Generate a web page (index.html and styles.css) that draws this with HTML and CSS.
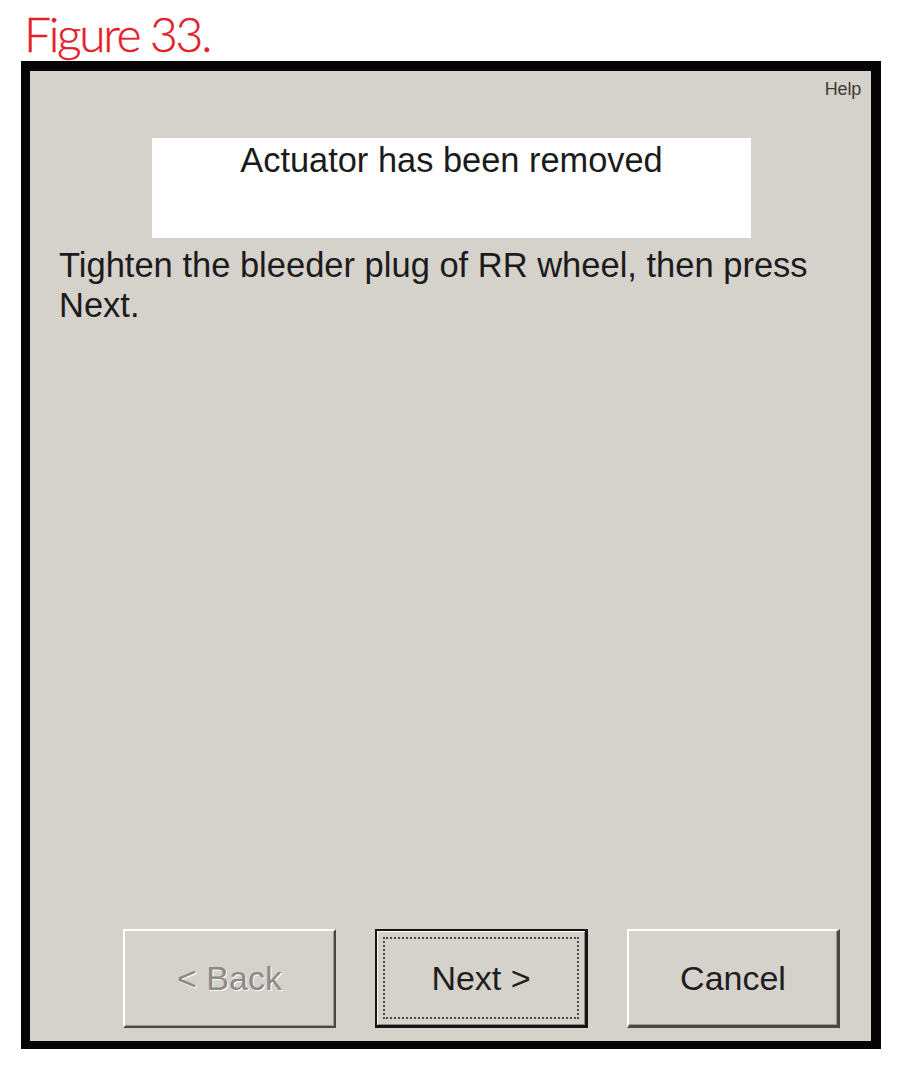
FILE: index.html
```html
<!DOCTYPE html>
<html lang="en">
<head>
<meta charset="utf-8">
<title>Figure 33</title>
<link rel="stylesheet" href="styles.css">
</head>
<body>
<div class="page">
  <h1 class="fig-title">Figure 33.</h1>
  <div class="dialog">
    <div class="help-row"><span class="help">Help</span></div>
    <div class="status-box">Actuator has been removed</div>
    <p class="instruction">Tighten the bleeder plug of RR wheel, then press Next.</p>
    <div class="buttons">
      <button class="btn btn-disabled" disabled><span class="btn-label">&lt; Back</span></button>
      <button class="btn btn-default"><span class="btn-label focus">Next &gt;</span></button>
      <button class="btn btn-normal"><span class="btn-label">Cancel</span></button>
    </div>
  </div>
</div>
</body>
</html>
```

FILE: styles.css
```css
html, body {
  margin: 0;
  padding: 0;
  background: #ffffff;
}

.page {
  width: 904px;
  height: 1072px;
  box-sizing: border-box;
  padding: 0 0 0 21px;
  display: flex;
  flex-direction: column;
}

.fig-title {
  margin: 0;
  padding: 10px 0 0 3px;
  height: 61px;
  box-sizing: border-box;
  font-family: "Lato", "Liberation Sans", sans-serif;
  font-weight: 300;
  font-size: 48px;
  line-height: 48px;
  letter-spacing: -2.3px;
  color: #e3202a;
  -webkit-text-stroke: 0.4px #e3202a;
}

.dialog {
  width: 860px;
  height: 988px;
  flex: none;
  box-sizing: border-box;
  border-style: solid;
  border-color: #050505;
  border-width: 10px 10px 8px 9px;
  background: #d5d1cb;
  display: flex;
  flex-direction: column;
  font-family: "Liberation Sans", Arial, sans-serif;
  color: #1b1b1b;
}

.help-row {
  display: flex;
  justify-content: flex-end;
  padding: 8px 10px 0 0;
  height: 20px;
}

.help {
  font-size: 18px;
  line-height: 20px;
  color: #3a3a3a;
  letter-spacing: -0.2px;
}

.status-box {
  margin: 39px 0 0 122px;
  width: 599px;
  height: 100px;
  box-sizing: border-box;
  padding-top: 3px;
  background: #ffffff;
  text-align: center;
  font-size: 34.4px;
  line-height: 38px;
}

.instruction {
  margin: 7px 30px 0 29px;
  font-size: 34.5px;
  line-height: 40px;
}

.buttons {
  margin-top: auto;
  display: flex;
  gap: 39px;
  padding: 0 0 13px 93px;
}

.btn {
  width: 213px;
  height: 99px;
  flex: none;
  box-sizing: border-box;
  margin: 0;
  padding: 0;
  background: #d5d1cb;
  font-family: "Liberation Sans", Arial, sans-serif;
  font-size: 34px;
  display: flex;
  align-items: center;
  justify-content: center;
  cursor: default;
}

.btn-label {
  display: block;
}

.btn-disabled {
  border-style: solid;
  border-width: 2px 2px 2px 2px;
  border-color: #ffffff #4a4846 #4a4846 #ffffff;
  box-shadow: inset -1px -1px 0 #9a9792;
  color: #8c8a87;
  text-shadow: 1px 1px 0 #ffffff;
}

.btn-normal {
  border-style: solid;
  border-width: 2px 3px 3px 2px;
  border-color: #ffffff #4a4846 #4a4846 #ffffff;
  box-shadow: inset -1px -1px 0 #9a9792;
  color: #1e1e1e;
}

.btn-default {
  border: 2px solid #151515;
  border-right-width: 3px;
  border-bottom-width: 3px;
  padding: 6px;
  color: #1e1e1e;
  box-shadow: inset 1px 1px 0 #ffffff, inset -1px -1px 0 #8a8783;
}

.btn-default .focus {
  flex: 1;
  align-self: stretch;
  display: flex;
  align-items: center;
  justify-content: center;
  border: 2px dotted #4a4846;
}
```
